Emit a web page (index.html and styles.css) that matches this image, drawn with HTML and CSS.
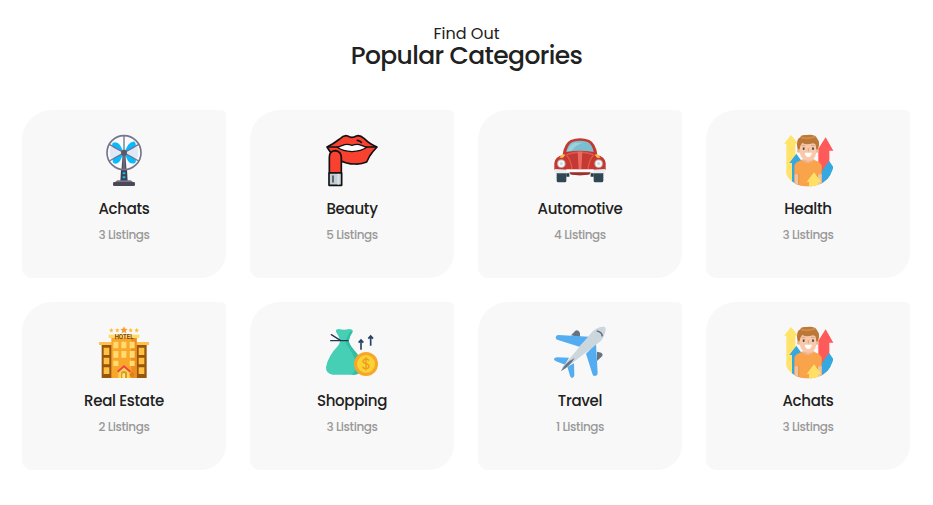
FILE: index.html
```html
<!DOCTYPE html>
<html lang="en">
<head>
<meta charset="utf-8">
<title>Popular Categories</title>
<link rel="stylesheet" href="styles.css">
</head>
<body>
<section class="categories">
  <header class="heading">
    <p class="eyebrow">Find Out</p>
    <h2 class="title">Popular Categories</h2>
  </header>
  <div class="grid">
    <article class="card">
      <svg class="icon" viewBox="0 0 180 180">
        <circle cx="90" cy="68" r="50" fill="#fbfbff"/>
        <path d="M90 67L51 48Q43 67 51 87ZM90 67L129 48Q137 67 129 87Z" fill="#e0e7f5"/>
        <path d="M90 68L78 45Q68 32 56 39Q51 47 60 54ZM90 68L102 45Q112 32 122 35Q130 45 120 54ZM90 68L62 82Q52 89 58 99Q68 106 78 93ZM90 68L118 82Q130 89 124 98Q112 105 102 93Z" fill="#08bbff"/>
        <path d="M86 67h8l6 92H80Z" fill="#52505f"/>
        <path d="M81 119h18l2 36H79Z" fill="#403f4d"/>
        <path d="M86 127h8v6h-8zM86 139h8v6h-8z" fill="#12bcf8"/>
        <circle cx="90" cy="68" r="51" fill="none" stroke="#75768a" stroke-width="5"/>
        <path d="M90 18v46M90 70v48M46 43l88 50M46 93l88-50" stroke="#75768a" stroke-width="4"/>
        <circle cx="90" cy="68" r="9" fill="#5b5968"/>
        <path d="M70 151h40l10 7H60Z" fill="#75768a"/>
        <rect x="57" y="156" width="66" height="12" rx="4" fill="#4b4959"/>
      </svg>
      <h3 class="name">Achats</h3>
      <p class="count">3 Listings</p>
    </article>
    <article class="card">
      <svg class="icon" viewBox="0 0 180 180" stroke="#111" stroke-width="5" stroke-linejoin="round" stroke-linecap="round">
        <path d="M15 51Q34 42 53 27Q66 14 77 18Q90 26 103 18Q113 14 127 26Q145 44 165 51Q150 67 143 78L134 96Q118 103 99 102Q73 102 50 89Q31 78 15 51Z" fill="#f8412f"/>
        <path d="M17 51H48M132 51H163" fill="none"/>
        <path d="M46 52Q58 48 68 44Q78 42 90 46Q102 42 112 44Q122 48 134 52Q118 64 90 65Q62 64 46 52Z" fill="#fff" stroke-width="4"/>
        <path d="M22 129V82Q22 62 41 62Q58 65 58 84V129Z" fill="#f8412f"/>
        <path d="M106 31q7 1 12 6" fill="none"/>
        <path d="M21 129h38v37H21Z" fill="#c4ced5"/>
        <path d="M49 134v27" stroke="#dce3e8" stroke-width="6"/>
        <path d="M33 138v18" stroke="#30343a" stroke-width="4"/>
      </svg>
      <h3 class="name">Beauty</h3>
      <p class="count">5 Listings</p>
    </article>
    <article class="card">
      <svg class="icon" viewBox="0 0 180 180">
        <path d="M20 126h29v27q0 4-5 4H25q-5 0-5-5ZM131 126h29v26q0 5-5 5h-19q-5 0-5-4Z" fill="#304754"/>
        <path d="M49 126h9v14h-9ZM122 126h9v14h-9Z" fill="#263a46"/>
        <path d="M61 124h58v9q-29 6-58 0Z" fill="#a92f28"/>
        <path d="M38 75Q42 40 62 30Q90 20 118 30Q138 40 142 75L130 82H50Z" fill="#c6382f"/>
        <path d="M49 66Q53 44 67 36Q90 29 113 36Q127 44 131 66Q90 59 49 66Z" fill="#79bfd0"/>
        <path d="M50 64Q60 42 74 38H99Q75 46 65 62Z" fill="#9bd0dc"/>
        <path d="M13 120V99Q15 80 40 75Q89 57 140 75Q165 80 167 99V120Z" fill="#c5372f"/>
        <path d="M48 76Q61 84 65 117h50Q119 84 132 76Q90 57 48 76Z" fill="#c23a31"/>
        <path d="M48 75Q62 86 66 117M132 75Q118 86 114 117M50 74Q90 58 130 74" fill="none" stroke="#e3584f" stroke-width="4"/>
        <path d="M83 65h14l-3 52h-8z" fill="#ec6a61"/>
        <path d="M28 83l10-11 8 2-7 9ZM152 83l-10-11-8 2 7 9Z" fill="#ffbd4a"/>
        <circle cx="34" cy="101" r="13" fill="#b9a9a9"/><circle cx="146" cy="101" r="13" fill="#b9a9a9"/>
        <circle cx="34" cy="101" r="10" fill="#f3f5f6"/><circle cx="146" cy="101" r="10" fill="#f3f5f6"/>
        <circle cx="34" cy="101" r="4" fill="#ced6da"/><circle cx="146" cy="101" r="4" fill="#ced6da"/>
        <path d="M14 117Q90 123 166 117V124Q165 130 158 130H22Q15 130 14 124Z" fill="#e9edef"/>
        <path d="M58 127h64l-4 6q-28 6-56 0Z" fill="#9d302b"/>
        <path d="M49 118h82v7H49z" fill="#fff"/>
      </svg>
      <h3 class="name">Automotive</h3>
      <p class="count">4 Listings</p>
    </article>
    <article class="card">
      <svg class="icon" viewBox="0 0 180 180">
        <defs>
          <clipPath id="person-clip"><path d="M0 0H180V96H168Q165 140 132 160Q93 178 54 162Q24 146 20 118V104H0Z"/></clipPath>
          <g id="person" clip-path="url(#person-clip)">
            <path d="M39 15l21 26H52V160H25V41H18Z" fill="#ffe36a"/>
            <path d="M143 22l23 40h-12v96h-33V62h-4Z" fill="#ff5a5a"/>
            <path d="M55 71l20 28h-7v70H42V99h-8Z" fill="#35a9df"/>
            <path d="M153 92l15 22v60h-44v-51h8Z" fill="#35a9df"/>
            <path d="M72 88h37v17q-18 13-37 0Z" fill="#efb391"/>
            <path d="M49 172V108Q50 96 72 90Q90 110 109 90Q130 97 131 108V172Z" fill="#f9a34a"/>
            <path d="M50 133h12v35H50ZM119 133h12v35h-12Z" fill="#f4c19f"/>
            <path d="M62 132v35M118 132v35" stroke="#dd8536" stroke-width="2"/>
            <circle cx="63" cy="62" r="6" fill="#edb28f"/><circle cx="117" cy="62" r="6" fill="#edb28f"/>
            <path d="M65 38Q90 29 115 42V67Q111 92 91 93Q69 90 65 67Z" fill="#fac8a8"/>
            <path d="M59 58Q52 29 67 22Q68 13 87 15Q112 12 117 25Q128 38 120 57L114 58Q116 40 105 40Q83 47 73 38Q66 46 65 58Z" fill="#bc7739"/>
            <path d="M69 22Q88 28 113 20" fill="none" stroke="#cd8c4a" stroke-width="6"/>
            <ellipse cx="77" cy="56" rx="3" ry="4" fill="#405060"/><ellipse cx="105" cy="56" rx="3" ry="4" fill="#405060"/>
            <path d="M71 47q6-3 11 0M99 47q6-3 11 0" fill="none" stroke="#c98f68" stroke-width="2"/>
            <path d="M91 55v9" stroke="#e4a37f" stroke-width="4"/>
            <path d="M80 68h22q-2 13-11 13T80 68Z" fill="#fff"/>
            <path d="M108 127l22 29h-9v17H93v-17h-7Z" fill="#ffe066"/>
          </g>
        </defs>
        <use href="#person"/>
      </svg>
      <h3 class="name">Health</h3>
      <p class="count">3 Listings</p>
    </article>
    <article class="card">
      <svg class="icon" viewBox="0 0 180 180">
        <path d="M90 13l3 7 8 1-6 5 2 8-7-4-7 4 2-8-6-5 8-1Z" fill="#f79b25"/>
        <path d="M52 18l2 4 5 1-4 3 1 5-4-2-4 2 1-5-4-3 5-1ZM70 18l2 4 5 1-4 3 1 5-4-2-4 2 1-5-4-3 5-1ZM110 18l2 4 5 1-4 3 1 5-4-2-4 2 1-5-4-3 5-1ZM128 18l2 4 5 1-4 3 1 5-4-2-4 2 1-5-4-3 5-1Z" fill="#ffbd45"/>
        <path d="M23 68h32v100H23ZM126 68h32v100h-32Z" fill="#98550c"/>
        <path d="M15 60h41v9H15ZM124 60h41v9h-41Z" fill="#ffc14b"/>
        <path d="M52 48h76v120H52Z" fill="#f9a72a"/>
        <path d="M112 48h16v120h-16Z" fill="#ef8e20"/>
        <path d="M44 38h92v10H44Z" fill="#ffdb68"/>
        <path d="M29 77h17v22H29ZM29 107h17v20H29ZM29 136h17v20H29ZM134 77h17v22h-17ZM134 107h17v20h-17ZM134 136h17v20h-17Z" fill="#ffc044"/>
        <path d="M58 59h15v20H58ZM82 59h15v20H82ZM107 59h15v20h-15ZM58 87h15v20H58ZM82 87h15v20H82ZM107 87h15v20h-15ZM58 116h15v16H58ZM107 116h15v16h-15Z" fill="#ffdb70"/>
        <path d="M73 168V146l17-14 17 14v22Z" fill="#ffd155"/>
        <path d="M81 168v-13q0-8 9-8t9 8v13Z" fill="#d79a2c"/>
        <path d="M85 168v-14h8v14Z" fill="#ffe989"/>
        <path d="M71 149l19-16 19 16" fill="none" stroke="#ed4545" stroke-width="6"/>
        <circle cx="114" cy="158" r="7" fill="#df8118"/>
        <text class="sign" x="90" y="51" textLength="56" lengthAdjust="spacingAndGlyphs">HOTEL</text>
      </svg>
      <h3 class="name">Real Estate</h3>
      <p class="count">2 Listings</p>
    </article>
    <article class="card">
      <svg class="icon" viewBox="0 0 180 180">
        <path d="M54 57Q52 43 42 29Q40 21 51 21Q67 26 81 21Q94 21 92 29Q82 43 80 57Q83 71 106 96Q130 142 111 154Q106 158 96 158H32Q11 155 12 136Q18 102 47 73Q53 66 54 57Z" fill="#46cfb5"/>
        <path d="M92 29Q82 43 80 57Q83 71 106 96Q130 142 111 154Q106 158 96 158H87Q108 147 100 116Q93 94 73 67Q69 54 81 35Q85 25 92 29Z" fill="#32bda4"/>
        <path d="M26 56h52M28 38l27 17" stroke="#243653" stroke-width="4" stroke-linecap="round"/>
        <path d="M117 83V56M110 62l7-8 7 8M146 71V44M139 50l7-8 7 8" fill="none" stroke="#244268" stroke-width="5"/>
        <circle cx="132" cy="126" r="36" fill="#f8a629"/>
        <circle cx="132" cy="126" r="27" fill="#f9d235"/>
        <path d="M141 116q-3-5-9-5t-9 6q0 6 9 8t9 8q0 7-9 7t-10-6M132 106v39" fill="none" stroke="#f09a21" stroke-width="4"/>
      </svg>
      <h3 class="name">Shopping</h3>
      <p class="count">3 Listings</p>
    </article>
    <article class="card">
      <svg class="icon" viewBox="0 0 180 180">
        <path d="M63 40l13-14q5-3 10 1l4 6v13ZM141 117v-28l13 3q6 4 3 10Z" fill="#657480"/>
        <path d="M117 44L25 39q-8 1-8 8 0 5 7 7l64 20ZM138 65l5 89q-1 8-9 8-6 0-7-7L108 95ZM57 107l-37-1q-8 1-8 6 0 3 6 6l27 10ZM72 124l1 36q-1 8-7 8-4 0-6-7l-8-27Z" fill="#54adf0"/>
        <path d="M33 147l5-13L128 28Q143 13 163 14Q168 17 167 21Q166 39 153 56L48 138Z" fill="#ccd6dd"/>
        <path d="M140 27q16 2 17 16" fill="none" stroke="#657480" stroke-width="5"/>
        <path d="M33 148q12-26 41-40-14 24-41 40Z" fill="#657480"/>
      </svg>
      <h3 class="name">Travel</h3>
      <p class="count">1 Listings</p>
    </article>
    <article class="card">
      <svg class="icon" viewBox="0 0 180 180"><use href="#person"/></svg>
      <h3 class="name">Achats</h3>
      <p class="count">3 Listings</p>
    </article>
  </div>
</section>
</body>
</html>
```
FILE: styles.css
```css
* { box-sizing: border-box; }
body {
  margin: 0;
  background: #fff;
  color: #212121;
  font-family: Poppins, Inter, "Liberation Sans", sans-serif;
}
h2, h3, p { margin: 0; }
.categories { padding: 23px 22px 35px; }
.heading { height: 87px; text-align: center; }
.eyebrow { font-size: 16px; line-height: 22px; }
.title { font-size: 25px; line-height: 22px; font-weight: 500; letter-spacing: -.6px; }
.grid {
  display: grid;
  grid-template-columns: repeat(4, 204px);
  gap: 24px;
}
.card {
  display: flex;
  flex-direction: column;
  align-items: center;
  height: 168px;
  padding-top: 20px;
  background: #f8f8f8;
  border-radius: 30px 5px 25px 10px;
}
.icon { width: 60px; height: 60px; flex: none; }
.name { margin-top: 9px; font-size: 15px; line-height: 20px; font-weight: 500; letter-spacing: -.3px; }
.count { margin-top: 6px; font-size: 12px; line-height: 20px; font-weight: 500; color: #999; letter-spacing: -.4px; }
.sign { font: 700 17px Inter, sans-serif; fill: #7a3e0b; text-anchor: middle; }
```
